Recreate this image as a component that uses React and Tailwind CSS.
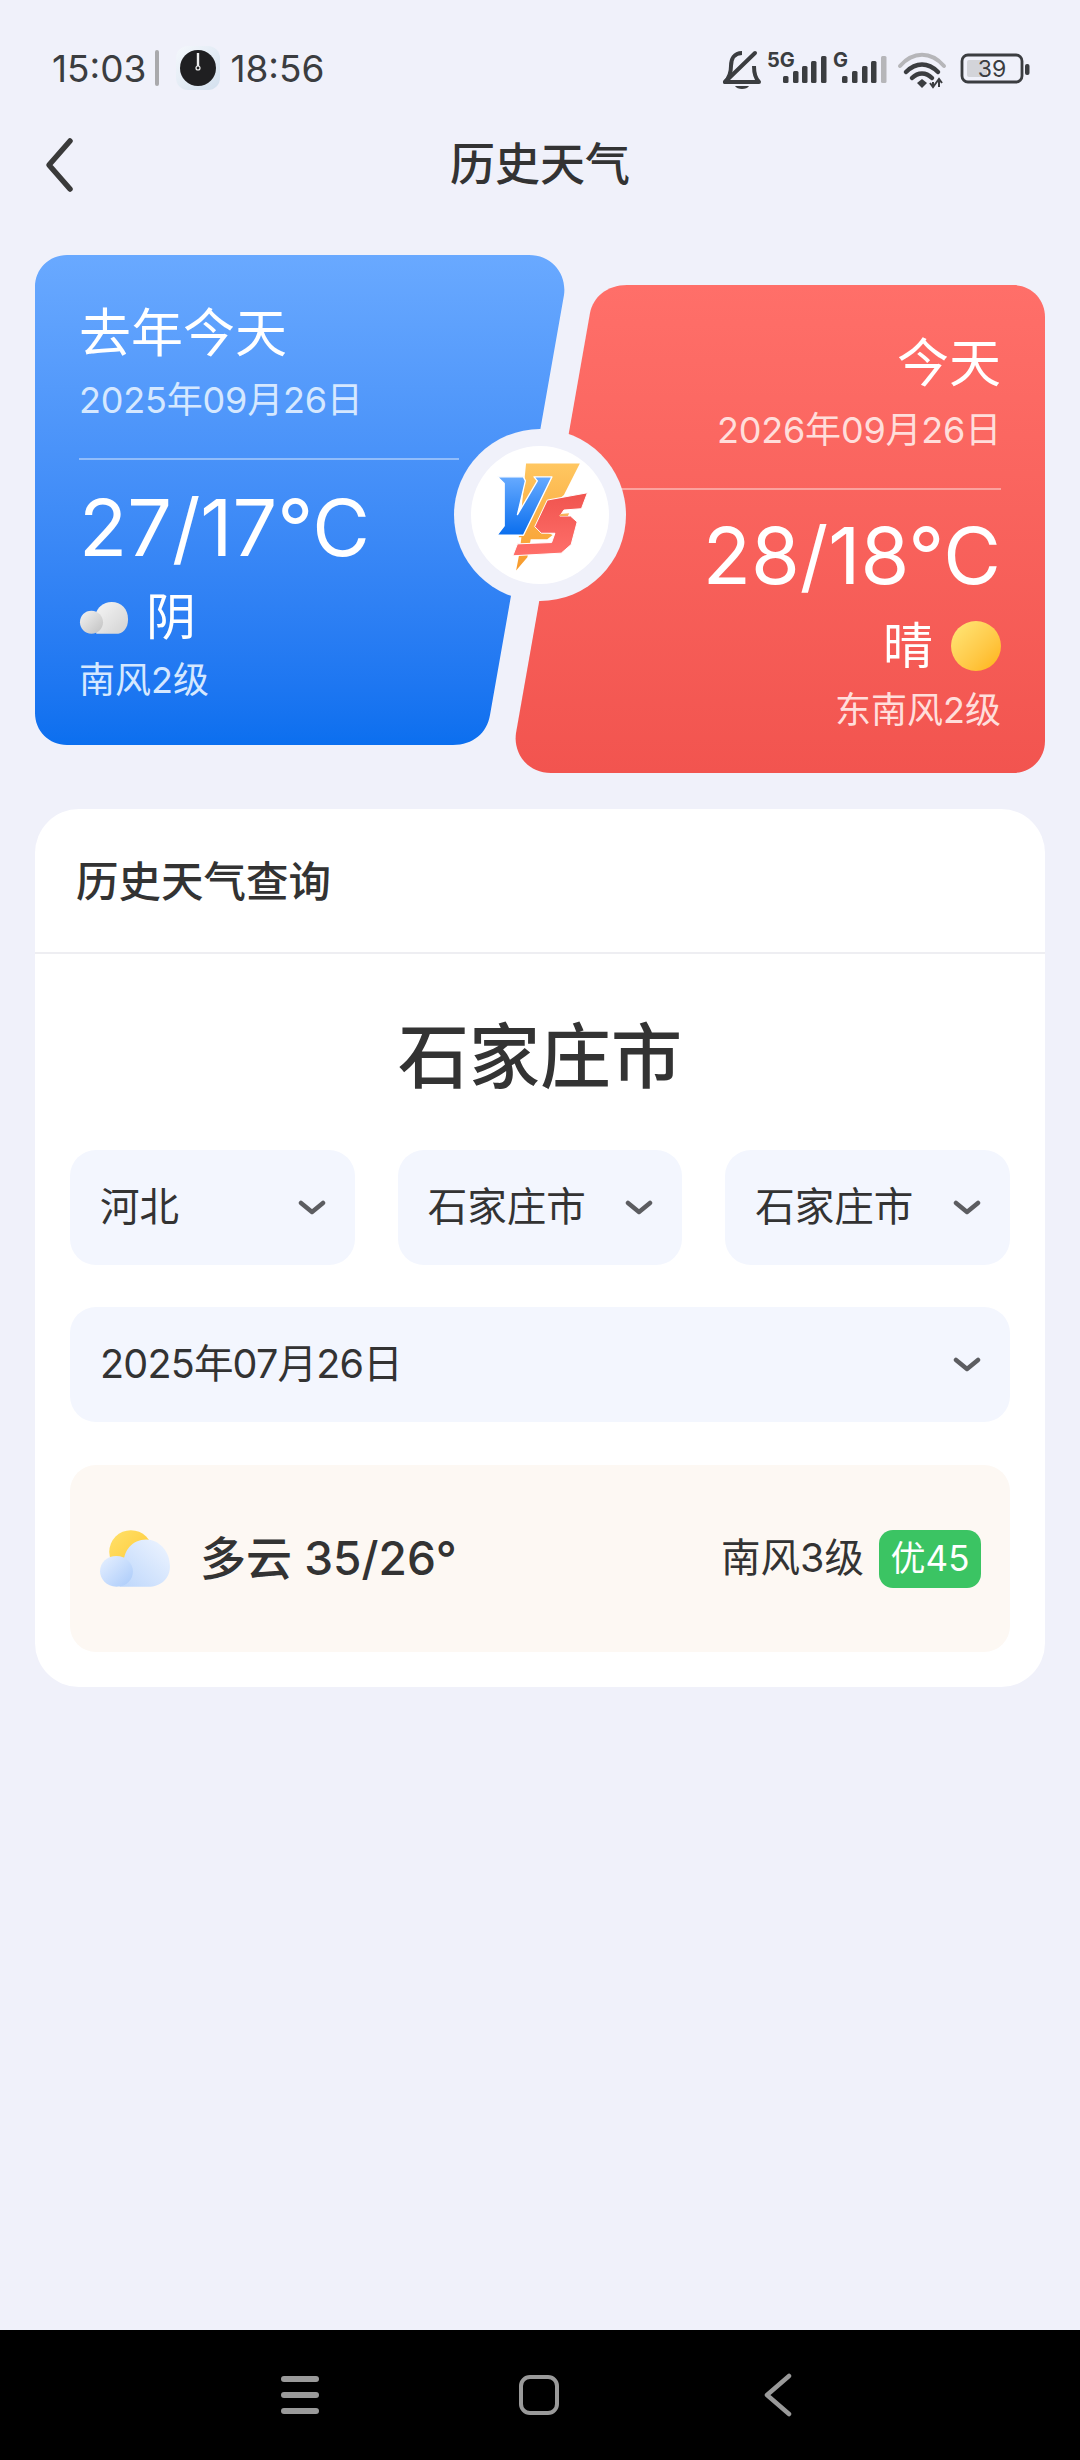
import React from 'react';

const leftCard = "[clip-path:path('M32_0H494C517_0_532_19_529_40L455_460C452_478_438_490_418_490H32C14_490_0_476_0_458V32C0_14_14_0_32_0Z')]";
const rightCard = "[clip-path:path('M499_488H37C14_488_-1_469_2_448L76_28C79_12_93_0_113_0H499C517_0_531_14_531_32V456C531_474_517_488_499_488Z')]";

function Chevron() {
    return (
        <svg width="28" height="16" viewBox="0 0 28 16" fill="none" className="shrink-0">
            <path d="M3 3 L14 12 L25 3" stroke="#5c5d61" strokeWidth="4.5" strokeLinecap="round" strokeLinejoin="round" />
        </svg>
    );
}

function Select({ label, className = '' }) {
    return (
        <div className={`flex h-[115px] items-center justify-between rounded-[26px] bg-[#f3f6fe] pl-[30px] pr-[29px] text-[39.5px] text-[#333333] ${className}`}>
            <span>{label}</span>
            <Chevron />
        </div>
    );
}

function StatusLeft() {
    return (
        <div className="flex items-center text-[37px] leading-none text-[#3b3d40]">
            <span>15:03</span>
            <span className="ml-[9px] h-[36px] w-[4px] rounded-sm bg-[#a9a9ac]" />
            <span className="ml-[17px] flex h-[44px] w-[44px] items-center justify-center rounded-[12px] bg-gradient-to-br from-[#f5f8fc] to-[#d3e0ee]">
                <svg width="38" height="38" viewBox="0 0 38 38">
                    <circle cx="19" cy="19" r="18" fill="#1f1f21" />
                    <path d="M19 4V18" stroke="#f0f0f0" strokeWidth="2.4" />
                    <circle cx="19" cy="19" r="2" fill="#1f1f21" stroke="#f0f0f0" strokeWidth="1.2" />
                </svg>
            </span>
            <span className="ml-[10px]">18:56</span>
        </div>
    );
}

function StatusRight() {
    const bars1 = [[783, 75], [793, 70], [802, 65], [811, 60], [821, 55]];
    const bars2 = [[842, 75], [852, 70], [862, 65], [871, 60], [881, 55]];
    return (
        <svg width="320" height="55" viewBox="720 40 320 55" fill="none">
            <path d="M742 52C734 52 731 58 731 65C731 72 729 77 725 81H759C755 77 754 72 754 65" stroke="#3b3d40" strokeWidth="4" strokeLinejoin="round" />
            <path d="M725 81L755 52" stroke="#3b3d40" strokeWidth="4" strokeLinecap="round" />
            <path d="M735 85H749C747 89 737 89 735 85Z" fill="#3b3d40" />
            <text x="767" y="66" fontSize="20" fontWeight="700" fill="#3b3d40">5G</text>
            {bars1.map(([x, y]) => <rect key={x} x={x} y={y} width="5.5" height={82 - y} rx="1.5" fill="#3b3d40" />)}
            <text x="833" y="66" fontSize="20" fontWeight="700" fill="#3b3d40">G</text>
            {bars2.map(([x, y], i) => <rect key={x} x={x} y={y} width="5.5" height={82 - y} rx="1.5" fill={i === 4 ? '#b6b6b9' : '#3b3d40'} />)}
            <path d="M900 65C913 50 931 50 944 65" stroke="#b6b6b9" strokeWidth="4" strokeLinecap="round" />
            <path d="M906 71C916 61 928 61 938 71" stroke="#3b3d40" strokeWidth="4.5" strokeLinecap="round" />
            <path d="M912 77C918 71 926 71 932 77" stroke="#3b3d40" strokeWidth="4.5" strokeLinecap="round" />
            <path d="M917 82L922 78L927 82L922 87Z" fill="#3b3d40" />
            <path d="M933 81V86M930 82L933 86L936 82M939 86V79M936 82L939 78L942 82" stroke="#3b3d40" strokeWidth="2" />
            <rect x="962" y="54" width="60" height="27" rx="6" stroke="#3b3d40" strokeWidth="2.8" />
            <rect x="967" y="59" width="20" height="17" rx="2" fill="#d3d4d9" />
            <text x="992" y="76" fontSize="23" textAnchor="middle" fill="#3b3d40">39</text>
            <rect x="1025" y="63" width="4.5" height="11" rx="2" fill="#3b3d40" />
        </svg>
    );
}

function VsBadge() {
    return (
        <div className="absolute left-[419px] top-[174px] flex h-[172px] w-[172px] items-center justify-center rounded-full bg-[#f0f1fa]">
            <div className="flex h-[138px] w-[138px] items-center justify-center rounded-full bg-white">
                <svg width="138" height="138" viewBox="92 77 416 416">
                    <defs>
                        <linearGradient id="vsV" x1="0" y1="0" x2="0" y2="1">
                            <stop offset="0" stopColor="#66aaff" />
                            <stop offset="1" stopColor="#0a6eee" />
                        </linearGradient>
                        <linearGradient id="vsO" x1="0" y1="0" x2="0" y2="1">
                            <stop offset="0" stopColor="#ffc761" />
                            <stop offset="1" stopColor="#f79a2c" />
                        </linearGradient>
                        <linearGradient id="vsS" x1="0" y1="0" x2="0" y2="1">
                            <stop offset="0" stopColor="#f0544f" />
                            <stop offset="1" stopColor="#ff6f6a" />
                        </linearGradient>
                    </defs>
                    <path d="M258 130H420L372 225L330 262L285 322L338 345L322 358H272L262 412L228 452L238 400L244 352H236Z" fill="url(#vsO)" />
                    <path d="M172 170H250L256 182L232 284L292 182L282 170H336L250 346H170L192 318L192 190Z" fill="url(#vsV)" stroke="#ffffff" strokeWidth="4" strokeLinejoin="round" />
                    <path d="M322 240L443 218L425 266L372 270L360 288H392L412 306L394 374L364 400L218 408L232 372L335 368L345 340H304L284 320Z" fill="url(#vsS)" stroke="#ffffff" strokeWidth="3" strokeLinejoin="round" />
                    <path d="M362 282L388 280L384 288H358Z" fill="#f9b35a" />
                </svg>
            </div>
        </div>
    );
}

function GreyCloud() {
    return (
        <svg width="50" height="35" viewBox="0 0 52 36">
            <defs>
                <linearGradient id="greyA" x1="0" y1="0" x2="1" y2="1">
                    <stop offset="0" stopColor="#f6f6f6" />
                    <stop offset="1" stopColor="#d2d2d2" />
                </linearGradient>
                <linearGradient id="greyB" x1="0" y1="0" x2="1" y2="1">
                    <stop offset="0" stopColor="#f4f4f4" />
                    <stop offset="1" stopColor="#c0c0c0" />
                </linearGradient>
            </defs>
            <path d="M18 35 H38 C46 35 51 29 51 20 C51 9 44 2 34 2 C25 2 19 8 17 15Z" fill="url(#greyA)" />
            <path d="M13 35 C6 35 1 29 1 23 C1 16 6 11 13 11 C20 11 25 17 25 23 C25 29 20 35 13 35Z" fill="url(#greyB)" />
        </svg>
    );
}

function SunCloud() {
    return (
        <svg width="72" height="58" viewBox="0 0 70 56">
            <defs>
                <linearGradient id="sunA" x1="0" y1="0" x2="1" y2="1">
                    <stop offset="0" stopColor="#ffe16b" />
                    <stop offset="1" stopColor="#ffc62e" />
                </linearGradient>
                <linearGradient id="cloudA" x1="1" y1="0" x2="0" y2="1">
                    <stop offset="0" stopColor="#eff5ff" />
                    <stop offset="1" stopColor="#bcd6fb" />
                </linearGradient>
                <linearGradient id="cloudB" x1="0" y1="0" x2="1" y2="1">
                    <stop offset="0" stopColor="#e8f1ff" />
                    <stop offset="1" stopColor="#a9cafa" />
                </linearGradient>
            </defs>
            <circle cx="31" cy="21" r="21" fill="url(#sunA)" />
            <path d="M20 55 H48 C60 55 69 47 69 35 C69 20 58 9 46 9 C32 9 24 20 24 32Z" fill="url(#cloudA)" />
            <path d="M17 55 C7 55 1 47 1 40 C1 31 8 25 17 25 C26 25 33 32 33 40 C33 48 27 55 17 55Z" fill="url(#cloudB)" />
        </svg>
    );
}

export default function App() {
    return (
        <div className="flex h-[2460px] w-[1080px] flex-col overflow-hidden bg-[#f0f1fa] font-['Inter','Noto_Sans_CJK_SC',sans-serif]">
            <div className="flex h-[116px] items-center justify-between pl-[52px] pr-[40px] pt-[20px]">
                <StatusLeft />
                <StatusRight />
            </div>

            <div className="grid h-[98px] grid-cols-[1fr_auto_1fr] items-center">
                <svg width="30" height="56" viewBox="0 0 30 56" fill="none" className="ml-[44px]">
                    <path d="M26 4L5 28L26 52" stroke="#3a3a3a" strokeWidth="5.5" strokeLinecap="round" strokeLinejoin="round" />
                </svg>
                <h1 className="text-[45px] font-medium text-[#333333]">历史天气</h1>
            </div>

            <div className="relative mx-[35px] mt-[41px] flex h-[521px] items-start justify-between">
                <div className={`h-[490px] w-[531px] shrink-0 bg-gradient-to-b from-[#69a9ff] to-[#0b6fef] pl-[44px] pt-[45px] text-white ${leftCard}`}>
                    <div className="text-[52px] leading-[68px]">去年今天</div>
                    <div className="mt-[7px] text-[36px] leading-[50px] tracking-[-0.2px] text-[#d5e8ff]">2025年09月26日</div>
                    <div className="mt-[33px] h-[2px] w-[380px] bg-white/40" />
                    <div className="mt-[17px] text-[79px] leading-[100px]">27/17°C</div>
                    <div className="mt-[10px] flex h-[60px] items-center gap-[17px] text-[50px]">
                        <GreyCloud />
                        <span>阴</span>
                    </div>
                    <div className="mt-[8px] text-[36px] leading-[50px] text-[#d5e8ff]">南风2级</div>
                </div>

                <div className={`-ml-[52px] mt-[30px] flex h-[488px] w-[531px] shrink-0 flex-col items-end bg-gradient-to-b from-[#ff6f69] to-[#f2544f] pr-[44px] pt-[45px] text-white ${rightCard}`}>
                    <div className="text-[52px] leading-[68px]">今天</div>
                    <div className="mt-[7px] text-[36px] leading-[50px] tracking-[-0.2px] text-[#ffdedb]">2026年09月26日</div>
                    <div className="mt-[33px] h-[2px] w-[385px] bg-white/40" />
                    <div className="mt-[15px] text-[79px] leading-[100px]">28/18°C</div>
                    <div className="mt-[11px] flex h-[60px] items-center gap-[18px] text-[50px]">
                        <span>晴</span>
                        <span className="h-[50px] w-[50px] rounded-full bg-gradient-to-br from-[#ffe878] to-[#ffb300]" />
                    </div>
                    <div className="mt-[9px] text-[36px] leading-[50px] text-[#ffdedb]">东南风2级</div>
                </div>

                <VsBadge />
            </div>

            <div className="mx-[35px] mt-[33px] rounded-[44px] bg-white">
                <div className="flex h-[145px] items-center border-b-2 border-[#eeeef2] pl-[41px] pt-[2px] text-[42.5px] font-medium text-[#333333]">
                    历史天气查询
                </div>
                <div className="px-[35px] pb-[35px]">
                    <div className="flex h-[196px] items-center justify-center pt-[8px] text-[71px] font-medium text-[#333333]">
                        石家庄市
                    </div>
                    <div className="grid grid-cols-3 gap-[43px]">
                        <Select label="河北" />
                        <Select label="石家庄市" />
                        <Select label="石家庄市" />
                    </div>
                    <Select label="2025年07月26日" className="mt-[42px] tracking-[-0.8px]" />
                    <div className="mt-[43px] flex h-[187px] items-center rounded-[26px] bg-[#fdf8f3] pl-[29px] pr-[29px]">
                        <SunCloud />
                        <span className="ml-[29px] text-[46px] font-medium text-[#333333]">多云 35/26°</span>
                        <span className="ml-auto text-[39.5px] text-[#333333]">南风3级</span>
                        <span className="ml-[15px] flex h-[58px] w-[102px] items-center justify-center rounded-[14px] bg-[#3bc463] text-[35px] text-white">优45</span>
                    </div>
                </div>
            </div>

            <div className="mt-auto flex h-[130px] items-center bg-black pl-[281px]">
                <div className="flex w-[38px] flex-col gap-[10px]">
                    <span className="h-[6px] rounded-full bg-[#9a9a9a]" />
                    <span className="h-[6px] rounded-full bg-[#9a9a9a]" />
                    <span className="h-[6px] rounded-full bg-[#9a9a9a]" />
                </div>
                <span className="ml-[200px] h-[40px] w-[40px] rounded-[11px] border-[4px] border-[#9a9a9a]" />
                <svg width="28" height="44" viewBox="0 0 28 44" fill="none" className="ml-[205px]">
                    <path d="M25 3L3 22L25 41" stroke="#9a9a9a" strokeWidth="4.5" strokeLinecap="round" strokeLinejoin="round" />
                </svg>
            </div>
        </div>
    );
}
